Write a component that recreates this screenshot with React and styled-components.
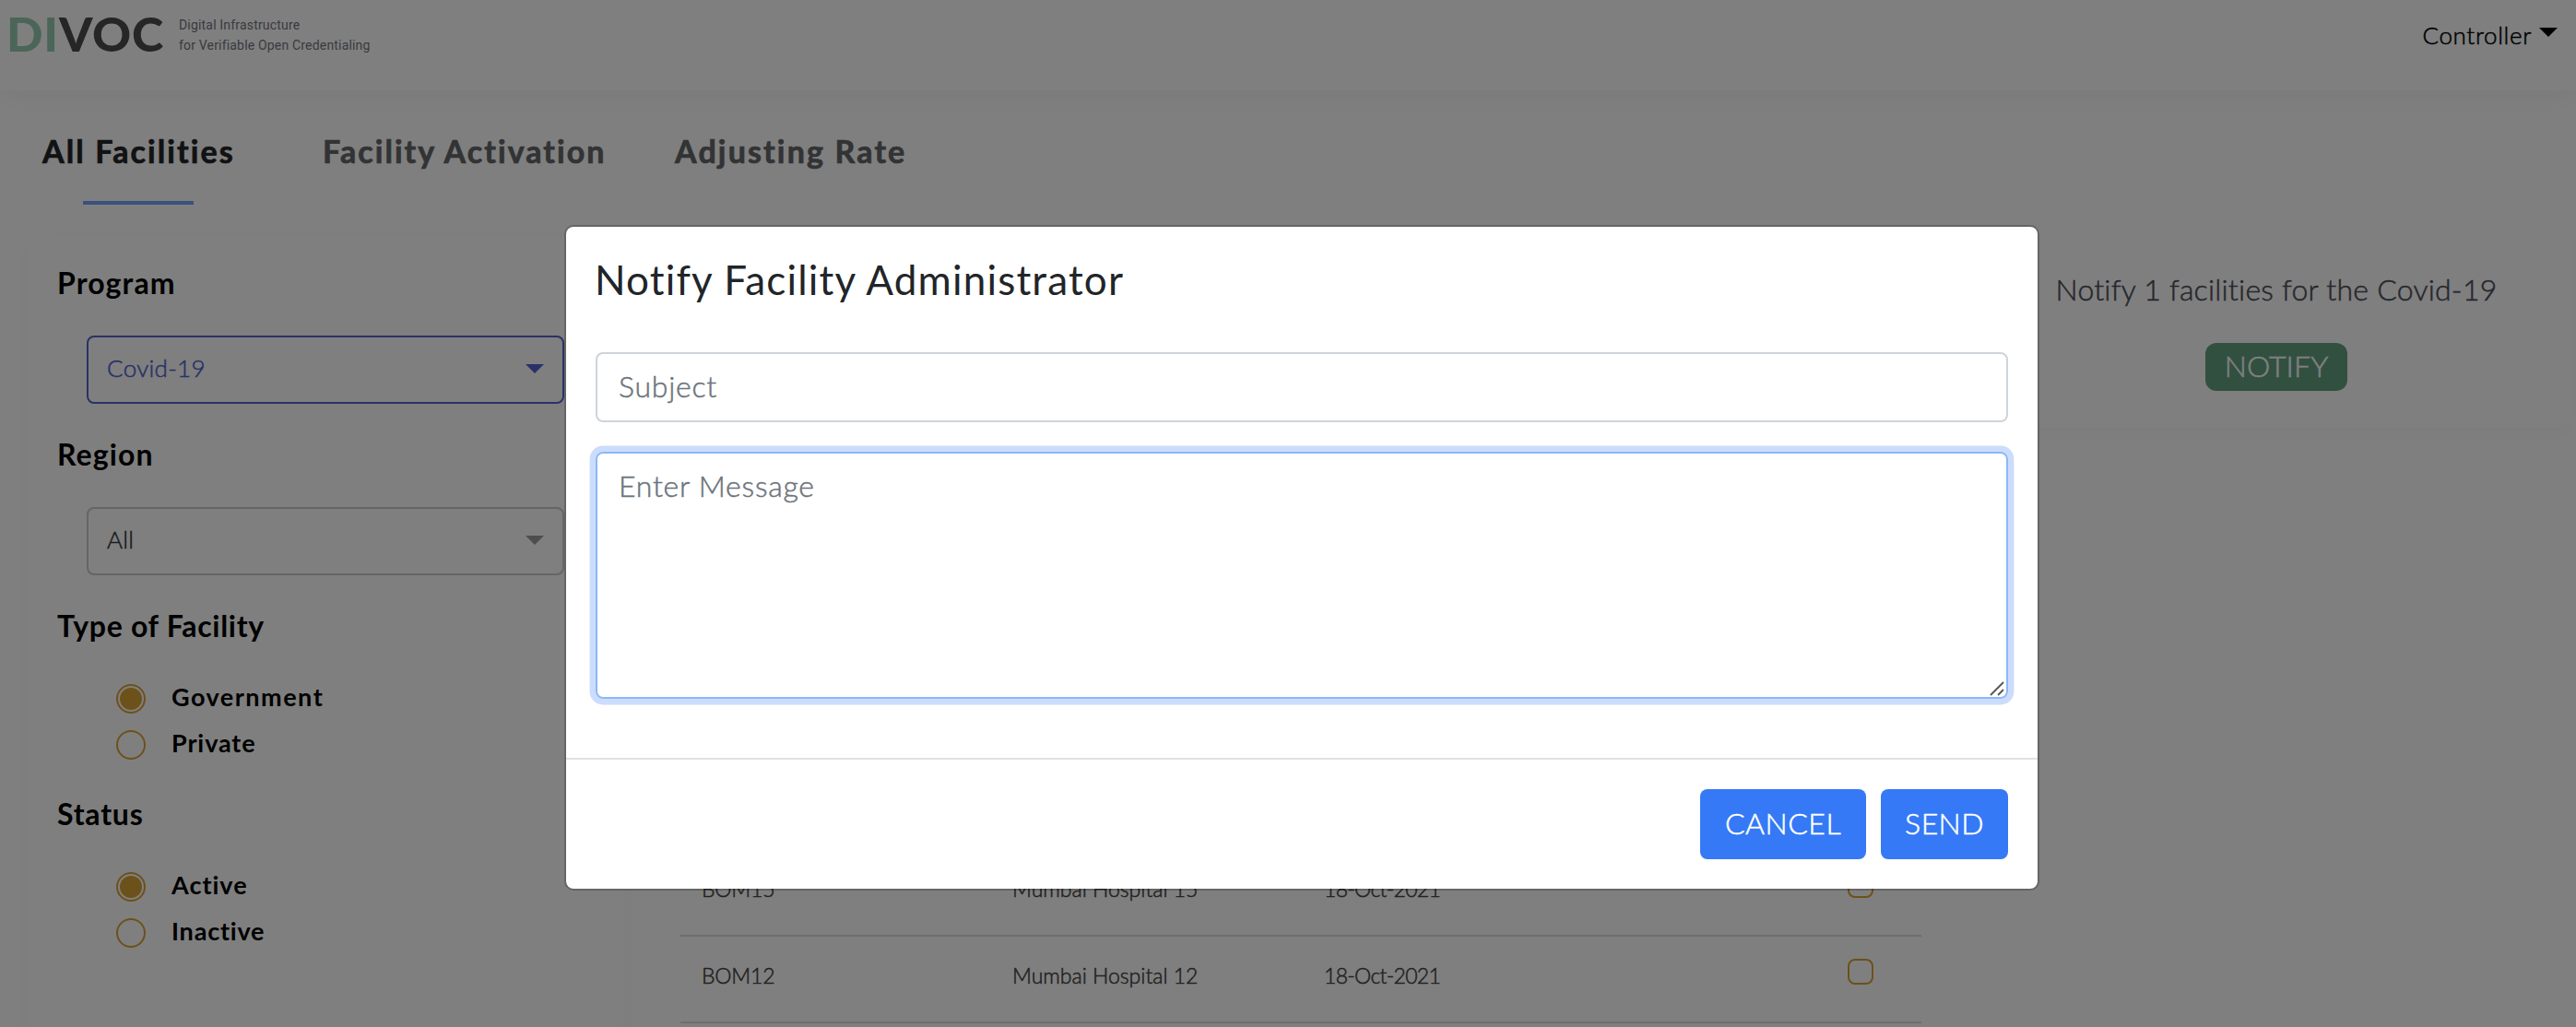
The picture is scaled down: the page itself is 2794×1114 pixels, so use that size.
import React from 'react';
import styled, { createGlobalStyle } from 'styled-components';

const sans = `Lato, "Open Sans", "Liberation Sans", sans-serif`;

const GlobalStyle = createGlobalStyle`
  *, *::before, *::after { box-sizing: border-box; }
  html, body { margin: 0; background: #fff; }
  body { width: 2794px; height: 1114px; overflow: hidden; font-family: ${sans}; font-variant-ligatures: none; }
`;

const Page = styled.div`
  position: relative;
  width: 2794px;
  height: 1114px;
  overflow: hidden;
  display: flex;
  flex-direction: column;
  background: #fff;
`;

const Label = styled.span`
  display: block;
  white-space: nowrap;
  font-family: ${(p) => p.$font || sans};
  font-size: ${(p) => p.$size}px;
  line-height: ${(p) => p.$line || 40}px;
  font-weight: ${(p) => p.$weight || 300};
  letter-spacing: ${(p) => p.$track || 0}px;
  color: ${(p) => p.$color || '#000'};
  -webkit-text-stroke: ${(p) => (p.$weight ? p.$stroke || 0 : 0.5)}px currentColor;
`;

const Header = styled.header`
  flex: none;
  height: 98px;
  padding: 10px 20px 0 7px;
  display: flex;
  justify-content: space-between;
  align-items: flex-start;
  box-shadow: 0 6px 30px rgba(0, 0, 0, 0.05);
`;

const Brand = styled.div`
  display: flex;
  gap: 15px;
`;

const Wordmark = styled.div`
  width: 172px;
  font-family: ${sans};
  font-weight: 900;
  font-size: 52px;
  line-height: 52px;
  letter-spacing: 0.8px;
  color: #4c4c4c;
  white-space: nowrap;
  span { color: #96cdb0; }
`;

const Tagline = styled.div`
  padding-top: 6px;
`;

const UserMenu = styled.div`
  display: flex;
  align-items: flex-start;
  gap: 8px;
  padding-top: 8px;
`;

const Caret = styled.svg`
  display: block;
  flex: none;
  width: ${(p) => p.$w}px;
  height: ${(p) => p.$h}px;
  margin-top: ${(p) => p.$top || 0}px;
  fill: ${(p) => p.$color};
`;

const Tabs = styled.nav`
  flex: none;
  display: flex;
  height: 148px;
  padding: 46px 0 0 46px;
`;

const Tab = styled.div`
  width: ${(p) => p.$width}px;
  height: 78px;
`;

const ActiveBar = styled.div`
  width: 120px;
  height: 4px;
  margin: 34px 0 0 44px;
  background: #74a3fb;
`;

const Content = styled.main`
  flex: 1;
  min-height: 0;
  display: flex;
  align-items: flex-start;
  padding-left: 30px;
`;

const card = `
  background: #fff;
  border-radius: 20px;
  box-shadow: 0 6px 24px rgba(0, 0, 0, 0.03);
`;

const Sidebar = styled.aside`
  ${card}
  flex: none;
  width: 646px;
  height: 980px;
  margin-top: 8px;
  padding: 33px 0 0 32px;
`;

const Group = styled.section`
  height: ${(p) => p.$height}px;
`;

const SelectBox = styled.div`
  width: 518px;
  height: 74px;
  margin: 37px 0 0 32px;
  padding: 0 20px 4px 20px;
  display: flex;
  align-items: center;
  justify-content: space-between;
  border: 2px solid ${(p) => p.$color};
  border-radius: 8px;
`;

const Options = styled.div`
  margin-top: 43px;
  padding-left: 64px;
  display: flex;
  flex-direction: column;
  gap: 18px;
`;

const Option = styled.label`
  display: flex;
  align-items: flex-start;
  height: 32px;
  gap: 28px;
`;

const Radio = styled.span`
  width: 32px;
  height: 32px;
  padding: 2px;
  border: 2px solid #d9a334;
  border-radius: 50%;
  &::after {
    content: '';
    display: block;
    width: 24px;
    height: 24px;
    border-radius: 50%;
    background: ${(p) => (p.$checked ? '#d9a334' : 'transparent')};
  }
`;

const Table = styled.div`
  flex: none;
  width: 1346px;
  margin: 676px 0 0 62px;
`;

const Row = styled.div`
  height: 94px;
  padding: 22px 52px 0 23px;
  display: grid;
  grid-template-columns: 337px 338px 1fr 28px;
  border-bottom: 2px solid #dcdcdc;
`;

const Checkbox = styled.span`
  width: 28px;
  height: 28px;
  margin-top: 2px;
  border: 2px solid #d9a334;
  border-radius: 8px;
`;

const NotifyCard = styled.section`
  ${card}
  flex: none;
  width: 642px;
  height: 218px;
  margin-left: 64px;
  display: flex;
  flex-direction: column;
  align-items: center;
  padding: 48px 0 0 0;
`;

const NotifyButton = styled.button`
  width: 154px;
  height: 52px;
  margin-top: 38px;
  padding: 0;
  display: flex;
  justify-content: center;
  border: 0;
  border-radius: 12px;
  background: #62a080;
`;

const Backdrop = styled.div`
  position: absolute;
  inset: 0;
  display: flex;
  justify-content: center;
  align-items: flex-start;
  padding: 244px 0 0 30px;
  background: rgba(0, 0, 0, 0.5);
`;

const Dialog = styled.div`
  width: 1600px;
  height: 722px;
  display: flex;
  flex-direction: column;
  background: #fff;
  background-clip: padding-box;
  border: 2px solid rgba(0, 0, 0, 0.2);
  border-radius: 10px;
`;

const DialogBody = styled.div`
  flex: 1;
  padding: 32px;
`;

const Title = styled.div`
  height: 52px;
  margin-left: -1px;
`;

const Field = styled.div`
  position: relative;
  height: ${(p) => p.$height}px;
  margin-top: ${(p) => p.$top}px;
  padding: 15px 23px;
  border: 2px solid ${(p) => (p.$focused ? '#8bb8f8' : '#ced4da')};
  border-radius: 8px;
  box-shadow: ${(p) => (p.$focused ? '0 0 0 6.4px #ccdcfd' : 'none')};
`;

const Grip = styled.svg`
  position: absolute;
  right: 2px;
  bottom: 1px;
  width: 16px;
  height: 16px;
  stroke: #555;
  stroke-width: 1.8;
  fill: none;
`;

const DialogFooter = styled.div`
  flex: none;
  height: 142px;
  padding: 32px;
  display: flex;
  justify-content: flex-end;
  gap: 16px;
  border-top: 2px solid #dee2e6;
`;

const ActionButton = styled.button`
  width: ${(p) => p.$width}px;
  height: 76px;
  padding: 0 0 3px;
  border: 0;
  border-radius: 8px;
  display: flex;
  align-items: center;
  justify-content: center;
  background: #3579f6;
`;

const roboto = 'Roboto, "Liberation Sans", sans-serif';

function GroupTitle({ children, track = 1 }) {
  return <Label $size={32} $weight={700} $track={track}>{children}</Label>;
}

function RadioGroup({ options }) {
  return (
    <Options>
      {options.map(([name, checked, track]) => (
        <Option key={name}>
          <Radio $checked={checked} />
          <Label $size={27} $weight={700} $line={28} $track={track}>{name}</Label>
        </Option>
      ))}
    </Options>
  );
}

function Select({ value, color, text, arrow }) {
  return (
    <SelectBox $color={color}>
      <Label $size={26} $color={text} $track={0.3}>{value}</Label>
      <Caret $w={20} $h={10} $top={2} viewBox="0 0 20 10" $color={arrow}><path d="M0 0h20L10 10z" /></Caret>
    </SelectBox>
  );
}

const rows = [
  ['BOM15', 'Mumbai Hospital 15', '18-Oct-2021'],
  ['BOM12', 'Mumbai Hospital 12', '18-Oct-2021'],
];

export default function App() {
  return (
    <>
      <GlobalStyle />
      <Page>
        <Header>
          <Brand>
            <Wordmark><span>DI</span>VOC</Wordmark>
            <Tagline>
              <Label $font={roboto} $weight={400} $size={14} $line={22} $track={0.18} $color="#74747f">Digital Infrastructure</Label>
              <Label $font={roboto} $weight={400} $size={14} $line={22} $track={0.18} $color="#74747f">for Verifiable Open Credentialing</Label>
            </Tagline>
          </Brand>
          <UserMenu>
            <Label $size={26} $track={0.65}>Controller</Label>
            <Caret $w={20} $h={10} $top={12} viewBox="0 0 20 10" $color="#000"><path d="M0 0h20L10 10z" /></Caret>
          </UserMenu>
        </Header>

        <Tabs>
          <Tab $width={304}>
            <Label $size={34} $weight={700} $stroke={0.7} $track={2.1} $color="#222426">All Facilities</Label>
            <ActiveBar />
          </Tab>
          <Tab $width={382}>
            <Label $size={34} $weight={700} $stroke={0.7} $track={2.05} $color="#646668">Facility Activation</Label>
          </Tab>
          <Tab $width={260}>
            <Label $size={34} $weight={700} $stroke={0.7} $track={2.15} $color="#646668">Adjusting Rate</Label>
          </Tab>
        </Tabs>

        <Content>
          <Sidebar>
            <Group $height={186}>
              <GroupTitle track={1.1}>Program</GroupTitle>
              <Select value="Covid-19" color="#5264d0" text="#5264d0" arrow="#5264d0" />
            </Group>
            <Group $height={186}>
              <GroupTitle track={1.1}>Region</GroupTitle>
              <Select value="All" color="#cacaca" text="#3c3c3c" arrow="#9a9a9a" />
            </Group>
            <Group $height={204}>
              <GroupTitle track={0.7}>Type of Facility</GroupTitle>
              <RadioGroup options={[['Government', true, 1.5], ['Private', false, 0.9]]} />
            </Group>
            <Group $height={204}>
              <GroupTitle track={0.8}>Status</GroupTitle>
              <RadioGroup options={[['Active', true, 1], ['Inactive', false, 0.8]]} />
            </Group>
          </Sidebar>

          <Table>
            {rows.map(([code, name, date]) => (
              <Row key={code}>
                <Label $size={23} $color="#444" $track={-0.2}>{code}</Label>
                <Label $size={23} $color="#444">{name}</Label>
                <Label $size={23} $color="#444" $track={-0.7}>{date}</Label>
                <Checkbox />
              </Row>
            ))}
          </Table>

          <NotifyCard>
            <Label $size={32} $color="#4f4f5a" $track={0.22}>Notify 1 facilities for the Covid-19</Label>
            <NotifyButton>
              <Label $size={32} $line={50} $track={0.1} $color="#fff">NOTIFY</Label>
            </NotifyButton>
          </NotifyCard>
        </Content>

        <Backdrop>
          <Dialog>
            <DialogBody>
              <Title>
                <Label $size={44} $weight={400} $line={51} $track={1.18} $color="#212529">Notify Facility Administrator</Label>
              </Title>
              <Field $height={76} $top={52}>
                <Label $size={32} $color="#6c757d" $track={0.75}>Subject</Label>
              </Field>
              <Field $height={268} $top={32} $focused>
                <Label $size={32} $color="#6c757d" $track={0.75}>Enter Message</Label>
                <Grip viewBox="0 0 16 16"><path d="M1 15 15 1M9 15l6-6" /></Grip>
              </Field>
            </DialogBody>
            <DialogFooter>
              <ActionButton $width={180}><Label $size={32} $track={0.5} $color="#fff">CANCEL</Label></ActionButton>
              <ActionButton $width={138}><Label $size={32} $track={0.4} $color="#fff">SEND</Label></ActionButton>
            </DialogFooter>
          </Dialog>
        </Backdrop>
      </Page>
    </>
  );
}
